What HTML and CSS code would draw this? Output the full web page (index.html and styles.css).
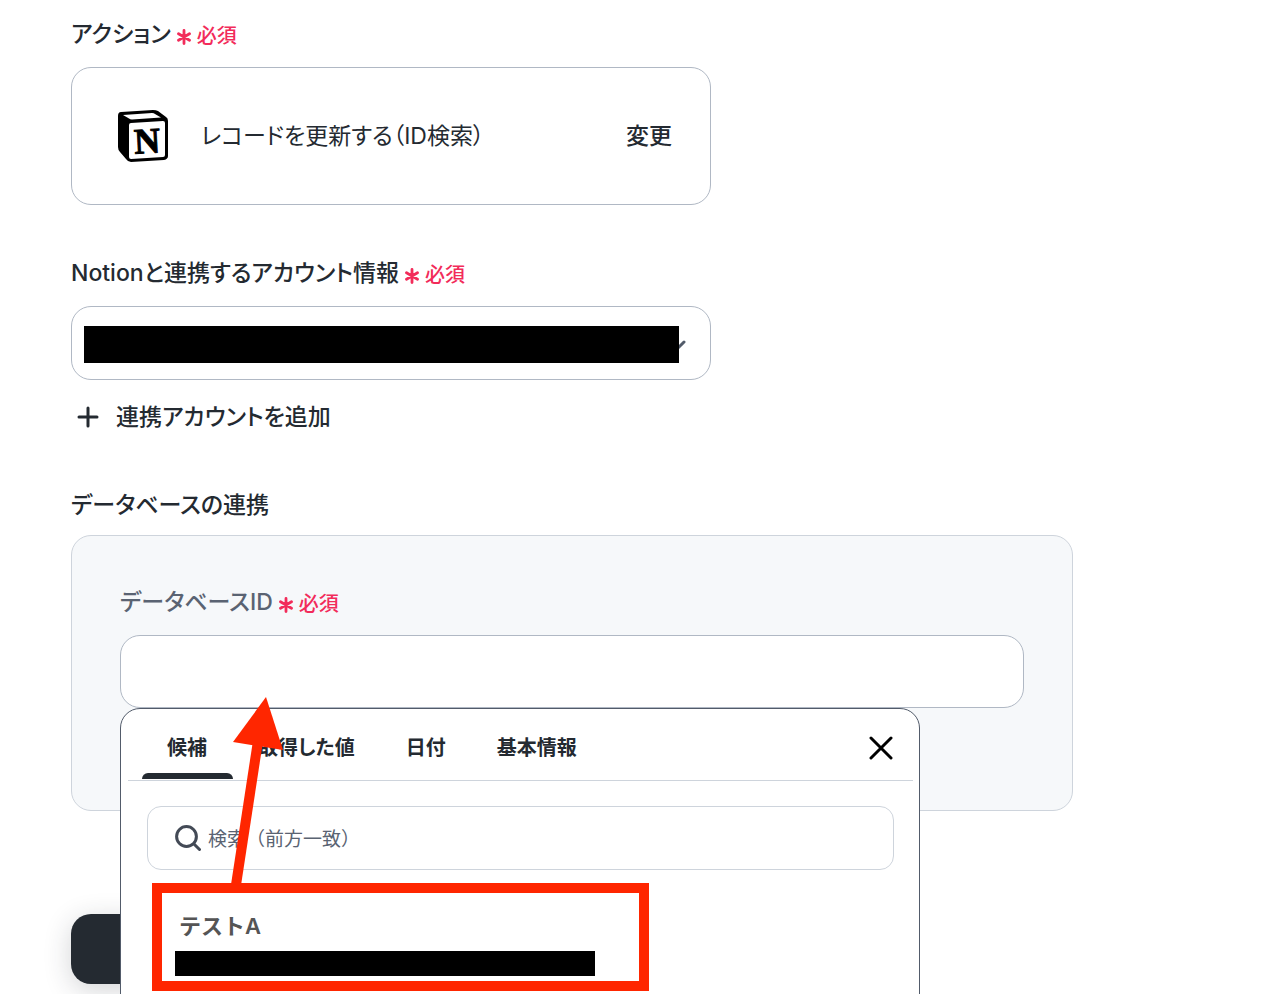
FILE: index.html
```
<!DOCTYPE html>
<html lang="ja">
<head>
<meta charset="UTF-8">
<meta name="viewport" content="width=device-width, initial-scale=1.0">
<link rel="stylesheet" href="styles.css">
<title>データベースの連携</title>
</head>
<body>
  <svg width="0" height="0" class="symbols">
    <symbol id="asterisk" viewBox="0 0 14 16">
      <path d="M7 1.5v13M1.5 4.8l11 6.4M12.5 4.8l-11 6.4" fill="none" stroke="currentColor" stroke-width="2.8" stroke-linecap="round"/>
    </symbol>
  </svg>

  <form class="page">
    <section class="section">
      <div class="label">
        <span>アクション</span>
        <svg class="asterisk"><use href="#asterisk"/></svg>
        <span class="required">必須</span>
      </div>
      <div class="action-card">
        <svg class="notion-logo" viewBox="0 0 52 54">
          <path d="M4 3L36 1Q39 1 41 2L49 8Q51 9 51 12V47Q51 50 47 51L14 53Q11 53 9 50L3 43Q1 41 1 38V7Q1 3 4 3Z" fill="#000"/>
          <path d="M6 6L35 4Q37 4 38 5L44 8.500L15 10.500Q13 10.500 12 9.500Z" fill="#fff"/>
          <path d="M12 16Q12 14 14 14L46 12Q48 12 48 14V46Q48 48 46 48L14 50Q12 50 12 48Z" fill="#fff"/>
          <text x="17" y="44" class="notion-letter" transform="rotate(-3 30 32)">N</text>
        </svg>
        <span class="action-name">レコードを更新する（ID検索）</span>
        <button type="button" class="change-button">変更</button>
      </div>
    </section>

    <section class="section">
      <label class="label" for="account">
        <span>Notionと連携するアカウント情報</span>
        <svg class="asterisk"><use href="#asterisk"/></svg>
        <span class="required">必須</span>
      </label>
      <div class="select-box">
        <select id="account" class="field"><option></option></select>
        <svg class="chevron" viewBox="0 0 18 12"><path d="M2 2l7 7 7-7" fill="none" stroke="#525b6a" stroke-width="3" stroke-linecap="round"/></svg>
        <div class="mask account-mask"></div>
      </div>
      <button type="button" class="add-button">
        <svg class="plus" viewBox="0 0 22 22"><path d="M11 2v18M2 11h18" stroke="currentColor" stroke-width="3" stroke-linecap="round"/></svg>
        連携アカウントを追加
      </button>
    </section>

    <section class="section">
      <h2 class="section-title">データベースの連携</h2>
      <div class="database-panel">
        <label class="label label-sub" for="database">
          <span>データベースID</span>
          <svg class="asterisk"><use href="#asterisk"/></svg>
          <span class="required">必須</span>
        </label>
        <div class="combo">
          <input type="text" id="database" class="field database-input">
          <div class="dropdown">
            <div class="tabs">
              <button type="button" class="tab active">候補</button>
              <button type="button" class="tab">取得した値</button>
              <button type="button" class="tab">日付</button>
              <button type="button" class="tab">基本情報</button>
              <button type="button" class="close-button" aria-label="閉じる">
                <svg class="cross" viewBox="0 0 24 24"><path d="M2 2l20 20M22 2L2 22" stroke="#000" stroke-width="3" stroke-linecap="round"/></svg>
              </button>
            </div>
            <div class="search">
              <svg class="search-icon" viewBox="0 0 26 26"><circle cx="11.500" cy="11.500" r="9.900" fill="none" stroke="#434a56" stroke-width="3"/><path d="M19 19l5.500 5.500" stroke="#434a56" stroke-width="3" stroke-linecap="round"/></svg>
              <input type="text" class="search-input" placeholder="検索（前方一致）" aria-label="検索">
            </div>
            <div class="option">
              <div class="option-name">テストA</div>
              <div class="mask option-mask"></div>
            </div>
            <!-- 候補から入力欄への矢印 -->
            <svg class="annotation" viewBox="0 0 497 294">
              <rect x="5" y="191" width="487" height="98" fill="none" stroke="#ff2600" stroke-width="10"/>
              <path d="M84 188L106 44" stroke="#ff2600" stroke-width="10"/>
              <path d="M114 0L131 53L81 45Z" fill="#ff2600"/>
            </svg>
          </div>
        </div>
      </div>
    </section>

    <button type="button" class="submit-button" aria-label="次へ"></button>
  </form>
</body>
</html>
```

FILE: styles.css
```
* {
  box-sizing: border-box;
}

body {
  height: 100vh;
  margin: 0;
  overflow: hidden;
  background-color: #fff;
  color: #242a31;
  font-family: Inter, "Noto Sans CJK JP", sans-serif;
  font-size: 23px;
  font-feature-settings: "palt";
  line-height: 1.4;
}

button,
input,
select {
  margin: 0;
  padding: 0;
  border: none;
  background: none;
  color: inherit;
  font: inherit;
  font-feature-settings: inherit;
}

button {
  cursor: pointer;
}

.symbols {
  position: absolute;
}

.page {
  max-width: 1144px;
  padding: 18px 71px 0;
}

.section {
  margin-bottom: 52px;
}

.label {
  display: flex;
  align-items: center;
  gap: 6px;
  height: 33px;
  margin-bottom: 16px;
  font-weight: 500;
}

.label-sub {
  color: #5a6372;
}

.asterisk {
  width: 14px;
  height: 16px;
  margin-top: 4px;
  color: #f22c5a;
}

.required {
  padding-top: 2px;
  color: #f22c5a;
  font-size: 20px;
}

.action-card {
  display: flex;
  align-items: center;
  max-width: 640px;
  height: 138px;
  padding: 0 38px 0 45px;
  border: 1px solid #b0b8c4;
  border-radius: 20px;
}

.notion-logo {
  width: 52px;
  height: 54px;
}

.notion-letter {
  font-family: "Liberation Serif", serif;
  font-size: 36px;
  font-weight: bold;
  stroke: #000;
  stroke-width: 1px;
}

.action-name {
  flex: 1;
  margin-left: 32px;
}

.change-button {
  font-weight: 500;
}

.select-box {
  position: relative;
  max-width: 640px;
}

.field {
  display: block;
  width: 100%;
  height: 74px;
  padding: 0 24px;
  border: 1px solid #b0b8c4;
  border-radius: 20px;
  background-color: #fff;
  appearance: none;
}

.database-input {
  height: 73px;
}

.chevron {
  position: absolute;
  top: 34px;
  right: 25px;
  width: 18px;
  height: 12px;
}

.mask {
  background-color: #000;
}

.account-mask {
  position: absolute;
  top: 20px;
  left: 13px;
  right: 32px;
  height: 37px;
}

.add-button {
  display: flex;
  align-items: center;
  gap: 17px;
  height: 40px;
  margin-top: 17px;
  padding-left: 6px;
  font-weight: 500;
}

.plus {
  width: 22px;
  height: 22px;
}

.section-title {
  height: 33px;
  margin: 0 0 13px;
  font-size: 23px;
  font-weight: 500;
  line-height: 33px;
}

.database-panel {
  padding: 50px 48px 102px;
  border: 1px solid #ced4dc;
  border-radius: 20px;
  background-color: #f6f8fa;
}

.combo {
  position: relative;
}

.dropdown {
  position: absolute;
  top: 100%;
  left: 0;
  z-index: 1;
  width: 800px;
  height: 400px;
  border: 1px solid #525b6a;
  border-radius: 20px;
  background-color: #fff;
}

.tabs {
  display: flex;
  height: 72px;
  margin: 0 6px 0 7px;
  padding: 0 20px 0 14px;
  border-bottom: 1px solid #ced4dc;
}

.tab {
  position: relative;
  height: 70px;
  padding: 8px 26px 0 25px;
  font-size: 20px;
  font-weight: 600;
}

.tab.active::after {
  content: "";
  position: absolute;
  left: 0;
  right: 0;
  bottom: 0;
  height: 6px;
  border-radius: 6px 6px 0 0;
  background-color: #242a31;
}

.close-button {
  display: flex;
  align-items: center;
  margin-left: auto;
  padding-top: 6px;
}

.cross {
  width: 24px;
  height: 24px;
}

.search {
  display: flex;
  align-items: center;
  gap: 7px;
  height: 64px;
  margin: 25px 25px 0 26px;
  padding: 0 27px;
  border: 1px solid #ced4dc;
  border-radius: 14px;
}

.search-icon {
  width: 26px;
  height: 26px;
}

.search-input {
  flex: 1;
  padding-top: 4px;
  font-size: 19px;
  font-feature-settings: normal;
  outline: none;
}

.search-input::placeholder {
  color: #5a6372;
}

.option {
  padding: 40px 54px;
}

.option-name {
  height: 32px;
  margin-left: 4px;
  color: #555;
  font-size: 22px;
  font-weight: 600;
  font-feature-settings: normal;
  line-height: 32px;
}

.option-mask {
  width: 420px;
  height: 25px;
  margin-top: 9px;
}

.annotation {
  position: absolute;
  top: -12px;
  left: 31px;
  width: 497px;
  height: 294px;
}

.submit-button {
  display: block;
  width: 320px;
  height: 70px;
  margin-top: 103px;
  border-radius: 20px;
  background-color: #242a31;
  box-shadow: 0 6px 28px rgba(36, 42, 49, 0.2);
}
```
